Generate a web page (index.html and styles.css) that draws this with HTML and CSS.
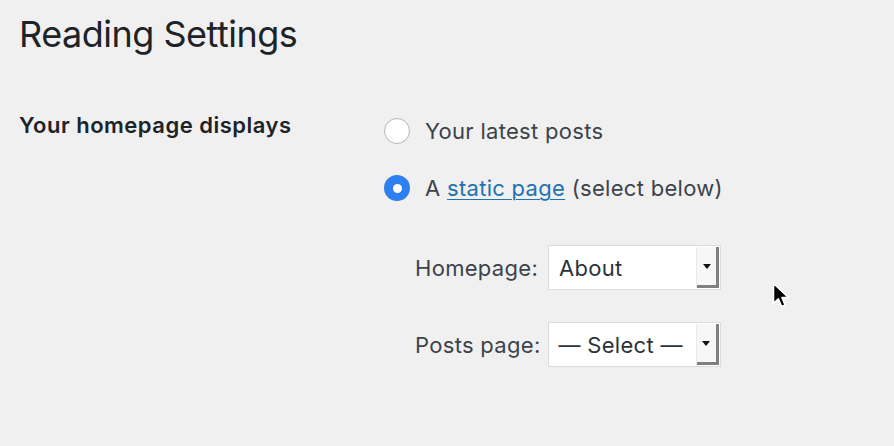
FILE: index.html
```html
<!DOCTYPE html>
<html lang="en">
<head>
<meta charset="utf-8">
<title>Reading Settings</title>
<link rel="stylesheet" href="styles.css">
</head>
<body>
<div class="wrap">
  <h1 class="page-title">Reading Settings</h1>
  <div class="form-row">
    <div class="form-label">Your homepage displays</div>
    <div class="form-field">
      <label class="radio-line">
        <span class="radio"></span>
        <span>Your latest posts</span>
      </label>
      <label class="radio-line radio-line-2">
        <span class="radio radio-checked"></span>
        <span>A <a class="link" href="#">static page</a> (select below)</span>
      </label>
      <div class="select-row select-row-1">
        <span class="select-label">Homepage:</span>
        <div class="select">
          <span class="select-value">About</span>
          <span class="select-btn"><span class="caret"></span></span>
        </div>
      </div>
      <div class="select-row select-row-2">
        <span class="select-label">Posts page:</span>
        <div class="select">
          <span class="select-value">— Select —</span>
          <span class="select-btn"><span class="caret"></span></span>
        </div>
      </div>
    </div>
  </div>
</div>
<svg class="cursor" width="20" height="28" viewBox="0 0 20 28" aria-hidden="true">
  <path d="M1.5 1.5 L1.5 21.5 L6.3 16.9 L9.6 24.6 L13.2 23.1 L10 15.6 L16.6 15.6 Z" fill="#000" stroke="#fff" stroke-width="1.6" stroke-linejoin="round"/>
</svg>
</body>
</html>
```
FILE: styles.css
```css
html, body {
  margin: 0;
  padding: 0;
  background: #f0f0f1;
}
body {
  font-family: Inter, "Noto Sans", "Liberation Sans", sans-serif;
  color: #3c434a;
  width: 894px;
  height: 446px;
  overflow: hidden;
  position: relative;
}
.wrap {
  padding: 16px 19px 0 19px;
}
.page-title {
  margin: 0;
  font-size: 36px;
  line-height: 36px;
  font-weight: 400;
  color: #1d2327;
  letter-spacing: -0.5px;
}
.form-row {
  display: flex;
  margin-top: 62px;
}
.form-label {
  width: 365px;
  font-size: 22px;
  line-height: 22px;
  font-weight: 600;
  color: #1d2327;
  letter-spacing: 0.5px;
}
.form-field {
  display: flex;
  flex-direction: column;
  padding-top: 4px;
  font-size: 22px;
  letter-spacing: 0.3px;
}
.radio-line {
  display: flex;
  align-items: center;
  height: 26px;
  line-height: 26px;
  gap: 15px;
}
.radio-line-2 {
  margin-top: 31px;
}
.radio {
  width: 26px;
  height: 26px;
  box-sizing: border-box;
  border-radius: 50%;
  border: 1px solid #b4b6b9;
  background: #fff;
  display: flex;
  align-items: center;
  justify-content: center;
}
.radio-checked {
  border: none;
  background: #2f7ff0;
}
.radio-checked::after {
  content: "";
  width: 9px;
  height: 9px;
  border-radius: 50%;
  background: #fff;
}
.link {
  color: #2271b1;
  text-decoration: underline;
  text-decoration-thickness: 1px;
  text-underline-offset: 3px;
}
.select-row {
  display: flex;
  align-items: center;
  padding-left: 31px;
  gap: 10px;
}
.select-row-1 {
  margin-top: 44px;
}
.select-row-2 {
  margin-top: 32px;
  gap: 7px;
}
.select {
  display: flex;
  width: 173px;
  height: 45px;
  box-sizing: border-box;
  border: 1px solid #dcdcde;
  background: #fff;
}
.select-value {
  flex: 1;
  display: flex;
  align-items: center;
  padding-left: 10px;
  color: #2c3338;
}
.select-btn {
  width: 23px;
  margin: 1px 1px 1px 0;
  box-sizing: border-box;
  background: #f6f7f7;
  border-left: 1px solid #eaeaea;
  box-shadow: inset -3px -3px 0 #808080;
  display: flex;
  align-items: center;
  justify-content: center;
  padding: 0 3px 3px 0;
}
.caret {
  width: 0;
  height: 0;
  border-left: 4.5px solid transparent;
  border-right: 4.5px solid transparent;
  border-top: 5px solid #111;
}
.cursor {
  position: absolute;
  left: 772px;
  top: 282px;
}
```
